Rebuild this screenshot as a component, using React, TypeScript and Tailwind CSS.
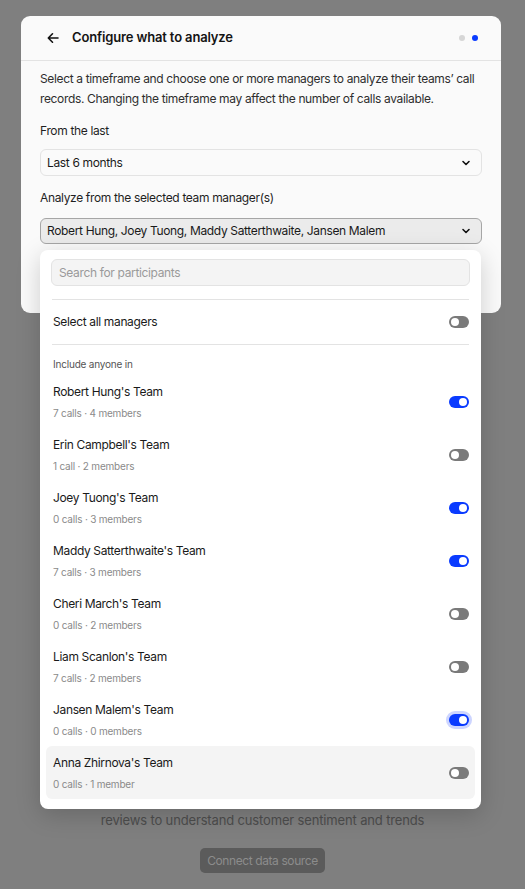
import React from "react";

const teams = [
  { name: "Robert Hung's Team", sub: "7 calls · 4 members", on: true },
  { name: "Erin Campbell's Team", sub: "1 call · 2 members", on: false },
  { name: "Joey Tuong's Team", sub: "0 calls · 3 members", on: true },
  { name: "Maddy Satterthwaite's Team", sub: "7 calls · 3 members", on: true },
  { name: "Cheri March's Team", sub: "0 calls · 2 members", on: false },
  { name: "Liam Scanlon's Team", sub: "7 calls · 2 members", on: false },
  { name: "Jansen Malem's Team", sub: "0 calls · 0 members", on: true, focus: true },
  { name: "Anna Zhirnova's Team", sub: "0 calls · 1 member", on: false, hover: true },
];

function Toggle({ on, focus }: { on: boolean; focus?: boolean }) {
  return (
    <div
      className={
        "flex h-[12px] w-[20px] items-center rounded-full px-[2px] " +
        (on ? "justify-end bg-[#0a3bff] " : "justify-start bg-[#7a7a7a] ") +
        (focus ? "ring-[3px] ring-[#cdd5ff]" : "")
      }
    >
      <div className="h-[8px] w-[8px] rounded-full bg-white" />
    </div>
  );
}

function Chevron() {
  return (
    <svg width="10" height="10" viewBox="0 0 10 10" fill="none">
      <path d="M2 3.5 L5 6.5 L8 3.5" stroke="#111" strokeWidth="1.6" strokeLinecap="round" strokeLinejoin="round" />
    </svg>
  );
}

export default function App() {
  return (
    <div
      className="relative h-[889px] w-full overflow-hidden bg-[#7f7f7f]"
      style={{ fontFamily: "Inter, 'Noto Sans', sans-serif" }}
    >
      {/* background page content (dimmed) */}
      <div className="flex flex-col items-center pt-[810px]">
        <div className="text-[13px] leading-[20px] tracking-[-0.15px] text-[#4d4d4d]">
          reviews to understand customer sentiment and trends
        </div>
        <div className="mt-[18px] flex h-[25px] items-center rounded-[5px] bg-[#5b5b5b] px-[7px] text-[12px] tracking-[-0.4px] text-[#8c8c8c]">
          Connect data source
        </div>
      </div>

      {/* modal */}
      <div className="absolute left-[21px] top-[16px] h-[297px] w-[480px] rounded-[9px] bg-[#fafafa]">
        <div className="flex h-[45px] items-center border-b border-[#e3e3e3] pl-[25px] pr-[23px]">
          <svg width="14" height="14" viewBox="0 0 14 14" fill="none">
            <path d="M12 7 H2.5 M6.5 2.8 L2.3 7 L6.5 11.2" stroke="#111" strokeWidth="1.6" strokeLinecap="round" strokeLinejoin="round" />
          </svg>
          <div className="ml-[12px] text-[13px] font-semibold tracking-[-0.15px] text-[#141414]">Configure what to analyze</div>
          <div className="ml-auto flex items-center gap-[7px]">
            <div className="h-[6px] w-[6px] rounded-full bg-[#d6d6d6]" />
            <div className="h-[6px] w-[6px] rounded-full bg-[#0a3bff]" />
          </div>
        </div>
        <div className="px-[19px] pt-[8px] tracking-[-0.35px]">
          <p className="text-[12px] leading-[20px] text-[#2e2e2e]">
            Select a timeframe and choose one or more managers to analyze their teams’ call records. Changing the
            timeframe may affect the number of calls available.
          </p>
          <div className="mt-[12px] text-[12px] leading-[20px] text-[#1f1f1f]">From the last</div>
          <div className="mt-[8px] flex h-[27px] items-center justify-between rounded-[6px] border border-[#e3e3e3] bg-[#fafafa] pl-[6px] pr-[10px] text-[12px] text-[#1a1a1a]">
            <span>Last 6 months</span>
            <Chevron />
          </div>
          <div className="mt-[12px] text-[12px] leading-[20px] text-[#1f1f1f]">Analyze from the selected team manager(s)</div>
          <div className="mt-[10px] flex h-[26px] items-center justify-between rounded-[6px] border border-[#a6a6a6] bg-[#ebebeb] pl-[6px] pr-[10px] text-[12px] text-[#1a1a1a]">
            <span>Robert Hung, Joey Tuong, Maddy Satterthwaite, Jansen Malem</span>
            <Chevron />
          </div>
        </div>
      </div>

      {/* popover */}
      <div className="absolute left-[40px] top-[250px] w-[441px] rounded-[8px] bg-white px-[6px] pb-[10px] shadow-[0_6px_24px_rgba(0,0,0,0.18)]">
        <div className="px-[5px] pt-[9px]">
          <div className="flex h-[27px] items-center rounded-[6px] border border-[#e3e3e3] bg-[#f4f4f4] px-[7px] text-[12px] tracking-[-0.35px] text-[#9a9a9a]">
            Search for participants
          </div>
        </div>
        <div className="mx-[6px] mt-[13px] border-t border-[#e3e3e3]" />
        <div className="flex h-[44px] items-center justify-between pl-[7px] pr-[6px]">
          <span className="text-[12px] tracking-[-0.35px] text-[#1a1a1a]">Select all managers</span>
          <Toggle on={false} />
        </div>
        <div className="mx-[6px] border-t border-[#e3e3e3]" />
        <div className="px-[7px] pb-[4px] pt-[12px] text-[10px] leading-[14px] tracking-[-0.2px] text-[#555]">Include anyone in</div>
        {teams.map((t) => (
          <div
            key={t.name}
            className={
              "flex h-[53px] items-center justify-between rounded-[6px] pl-[7px] pr-[6px] " +
              (t.hover ? "bg-[#f4f4f4]" : "")
            }
          >
            <div className="flex h-full flex-col pt-[9px]">
              <div className="text-[12px] leading-[16px] tracking-[-0.35px] text-[#1a1a1a]">{t.name}</div>
              <div className="mt-[6px] text-[10px] leading-[14px] tracking-[-0.2px] text-[#8a8a8a]">{t.sub}</div>
            </div>
            <Toggle on={t.on} focus={t.focus} />
          </div>
        ))}
      </div>
    </div>
  );
}
